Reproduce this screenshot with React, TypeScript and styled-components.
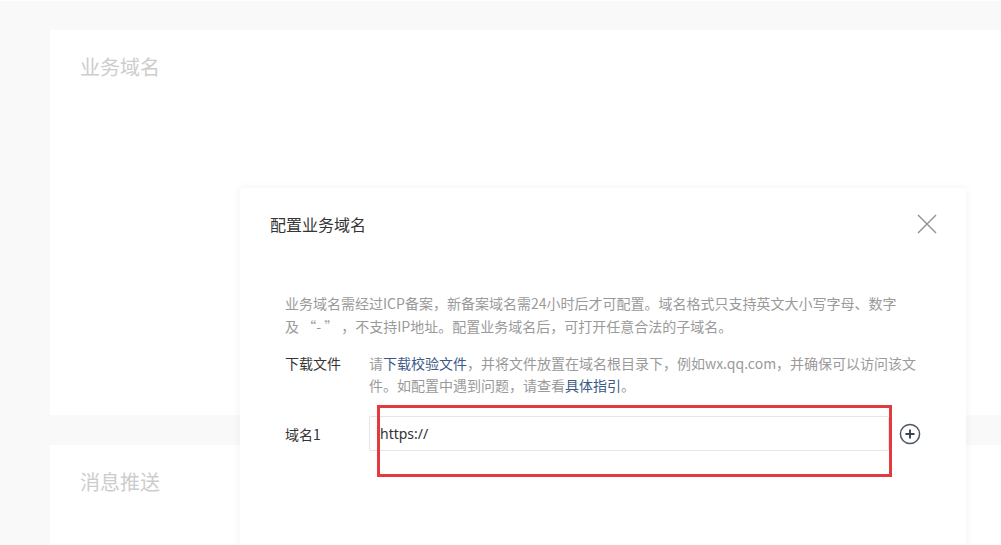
import React from "react";
import styled, { createGlobalStyle } from "styled-components";

const GlobalStyle = createGlobalStyle`
  html, body {
    margin: 0;
    padding: 0;
    background: #f9f9fa;
    font-family: "Noto Sans CJK SC", "Noto Sans", sans-serif;
    overflow: hidden;
  }
`;

const App: React.FC = () => {
  return (
    <Page>
      <GlobalStyle />

      {/* Background cards */}
      <Column>
        <TopStub />
        <Card $height={385}>
          <CardTitle>业务域名</CardTitle>
        </Card>
        <Card $height={160}>
          <CardTitle>消息推送</CardTitle>
        </Card>
      </Column>

      {/* Dialog */}
      <Dialog>
        <DialogHeader>
          <DialogTitle>配置业务域名</DialogTitle>
          <CloseButton aria-label="close">
            <svg width="20" height="20" viewBox="0 0 20 20">
              <path d="M1 1L19 19M19 1L1 19" stroke="#8f8f8f" strokeWidth="1.4" fill="none" />
            </svg>
          </CloseButton>
        </DialogHeader>

        <DialogBody>
          <Notice>
            业务域名需经过ICP备案，新备案域名需24小时后才可配置。域名格式只支持英文大小写字母、数字
            <br />
            及 “- ” ，不支持IP地址。配置业务域名后，可打开任意合法的子域名。
          </Notice>

          <FormRow>
            <Label>下载文件</Label>
            <FieldText>
              请<Link>下载校验文件</Link>，并将文件放置在域名根目录下，例如wx.qq.com，并确保可以访问该文
              <br />
              件。如配置中遇到问题，请查看<Link>具体指引</Link>。
            </FieldText>
          </FormRow>

          <InputRow>
            <Label>域名1</Label>
            <InputWrap>
              <Input defaultValue="https://" />
              <Highlight />
            </InputWrap>
            <AddButton aria-label="add">
              <svg width="22" height="22" viewBox="0 0 22 22">
                <circle cx="11" cy="11" r="9.6" stroke="#4f5766" strokeWidth="1.5" fill="none" />
                <path d="M11 6.5V15.5M6.5 11H15.5" stroke="#3a4250" strokeWidth="1.9" />
              </svg>
            </AddButton>
          </InputRow>
        </DialogBody>
      </Dialog>
    </Page>
  );
};

export default App;

/* Styled Components */
const Page = styled.div`
  position: relative;
  width: 1001px;
  height: 545px;
  overflow: hidden;
  background: #f9f9fa;
`;

const Column = styled.div`
  display: flex;
  flex-direction: column;
  gap: 29px;
  padding-left: 50px;
`;

const TopStub = styled.div`
  height: 1px;
  background: #fdfdfd;
  margin-left: -50px;
`;

const Card = styled.div<{ $height: number }>`
  height: ${({ $height }) => $height}px;
  background: #ffffff;
  padding: 23px 30px 0;
  box-sizing: border-box;
  flex-shrink: 0;

  & + & {
    margin-top: 1px;
  }
`;

const CardTitle = styled.h2`
  margin: 0;
  font-size: 20px;
  line-height: 28px;
  font-weight: 400;
  color: #cdcdcd;
`;

const Dialog = styled.div`
  position: absolute;
  left: 240px;
  top: 188px;
  width: 726px;
  height: 400px;
  background: #ffffff;
  border-radius: 4px;
  box-shadow: 0 0 10px rgba(0, 0, 0, 0.06);
`;

const DialogHeader = styled.div`
  display: flex;
  align-items: center;
  justify-content: space-between;
  padding: 24px 28px 0 30px;
  height: 24px;
`;

const DialogTitle = styled.h3`
  margin: 0;
  font-size: 16px;
  line-height: 24px;
  font-weight: 400;
  color: #353535;
`;

const CloseButton = styled.button`
  display: flex;
  align-items: center;
  justify-content: center;
  width: 22px;
  height: 22px;
  padding: 0;
  border: none;
  background: none;
  cursor: pointer;
`;

const DialogBody = styled.div`
  padding: 56px 45px 0;
`;

const Notice = styled.p`
  margin: 0 0 14px;
  font-size: 14px;
  line-height: 23px;
  color: #9a9a9a;
  white-space: pre-line;
`;

const FormRow = styled.div`
  display: flex;
  align-items: flex-start;
`;

const Label = styled.div`
  width: 84px;
  flex-shrink: 0;
  font-size: 14px;
  line-height: 22px;
  color: #353535;
`;

const FieldText = styled.div`
  font-size: 14px;
  line-height: 22px;
  color: #9a9a9a;
  white-space: nowrap;
`;

const Link = styled.a`
  color: #3d5a87;
  text-decoration: none;
  cursor: pointer;
`;

const InputRow = styled.div`
  display: flex;
  align-items: center;
  margin-top: 20px;
`;

const InputWrap = styled.div`
  position: relative;
  width: 520px;
`;

const Input = styled.input`
  display: block;
  width: 100%;
  height: 35px;
  box-sizing: border-box;
  padding: 0 10px;
  border: 1px solid #e6e6e6;
  border-radius: 2px;
  font-family: "Noto Sans", "Noto Sans CJK SC", sans-serif;
  font-size: 14px;
  color: #333333;
  outline: none;
`;

/* red annotation frame drawn over the input */
const Highlight = styled.div`
  position: absolute;
  left: 8px;
  top: -11px;
  width: 515px;
  height: 72px;
  box-sizing: border-box;
  border: 3px solid #e23b3f;
  pointer-events: none;
`;

const AddButton = styled.button`
  display: flex;
  align-items: center;
  justify-content: center;
  margin-left: 10px;
  width: 22px;
  height: 22px;
  padding: 0;
  border: none;
  background: none;
  cursor: pointer;
`;
